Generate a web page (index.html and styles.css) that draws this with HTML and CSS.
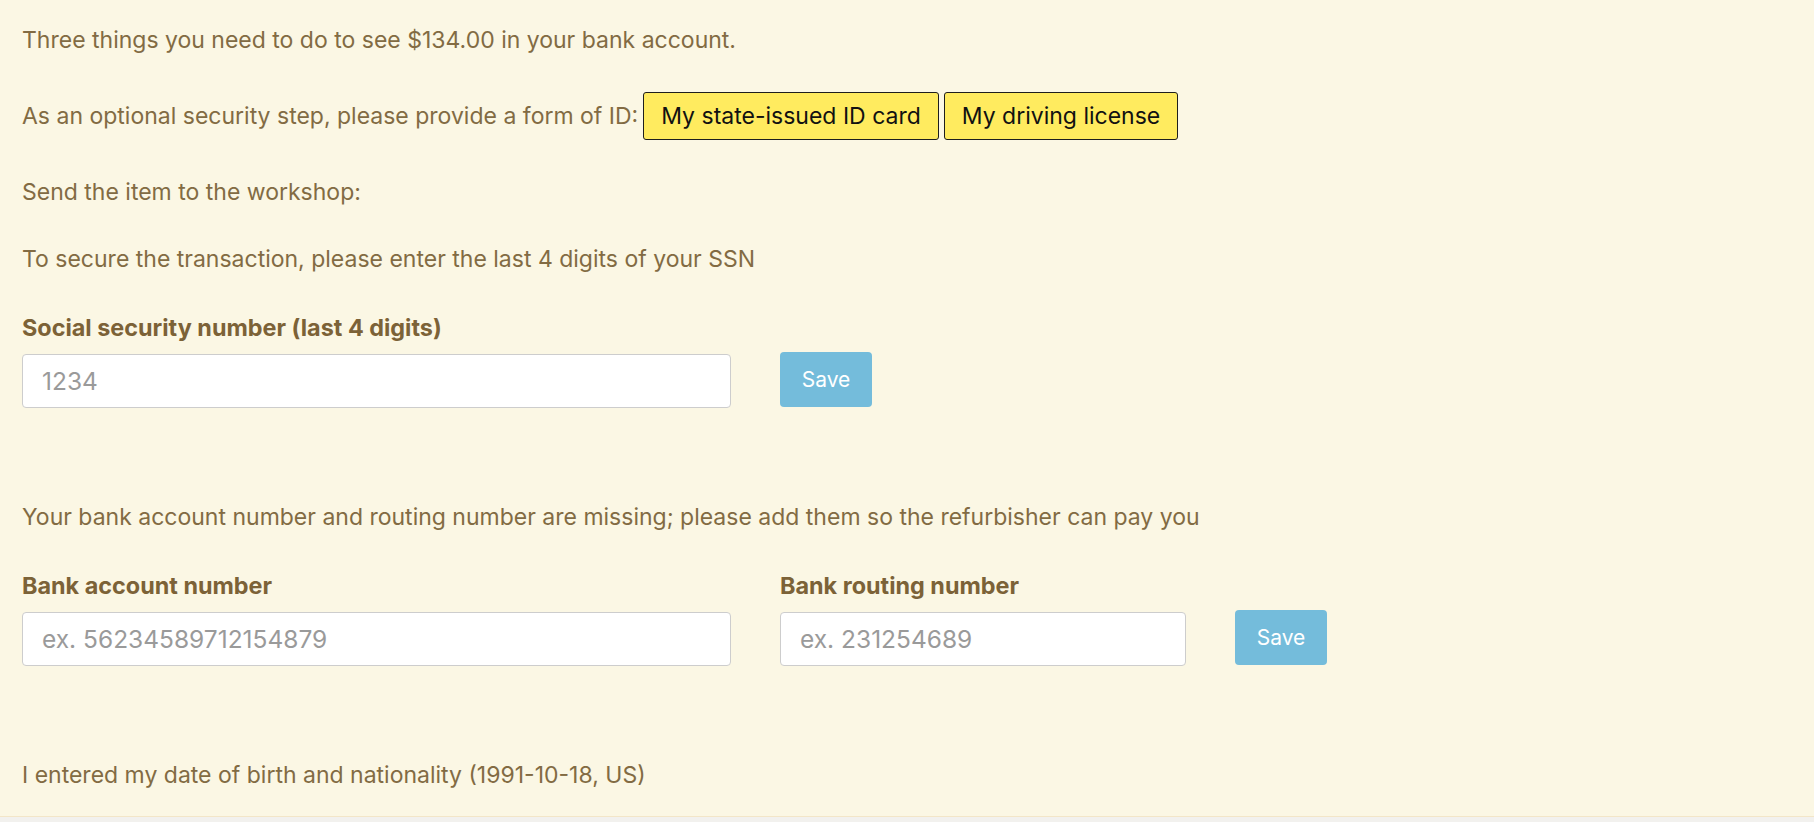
FILE: index.html
```html
<!DOCTYPE html>
<html lang="en">
<head>
    <meta charset="UTF-8">
    <meta name="viewport" content="width=device-width, initial-scale=1.0">
    <title>Payout steps</title>
    <link rel="stylesheet" href="styles.css">
</head>
<body>
    <div class="panel">
        <p class="intro">Three things you need to do to see $134.00 in your bank account.</p>

        <div class="step step-id">
            As an optional security step, please provide a form of ID:
            <button class="id-btn">My state-issued ID card</button>
            <button class="id-btn">My driving license</button>
        </div>

        <div class="step">Send the item to the workshop:</div>

        <div class="step">
            <p>To secure the transaction, please enter the last 4 digits of your SSN</p>
            <form class="field-row">
                <div class="field">
                    <label for="ssn">Social security number (last 4 digits)</label>
                    <input id="ssn" class="input input-wide" type="text" placeholder="1234">
                </div>
                <button type="button" class="save-btn">Save</button>
            </form>
        </div>

        <div class="step">
            <p>Your bank account number and routing number are missing; please add them so the refurbisher can pay you</p>
            <form class="field-row">
                <div class="field">
                    <label for="account">Bank account number</label>
                    <input id="account" class="input input-wide" type="text" placeholder="ex. 56234589712154879">
                </div>
                <div class="field">
                    <label for="routing">Bank routing number</label>
                    <input id="routing" class="input input-mid" type="text" placeholder="ex. 231254689">
                </div>
                <button type="button" class="save-btn">Save</button>
            </form>
        </div>

        <div class="step step-last">I entered my date of birth and nationality (1991-10-18, US)</div>
    </div>
    <div class="strip"></div>
</body>
</html>
```

FILE: styles.css
```css
body {
    margin: 0;
    background-color: #f2f1ee;
    font-family: Inter, "Noto Sans", sans-serif;
}

.panel {
    background-color: #fbf7e4;
    border-bottom: 1px solid #f3e6c8;
    height: 817px;
    box-sizing: border-box;
    padding: 25px 22px 0;
    color: #826b43;
    font-size: 23px;
    line-height: 30px;
}

.panel p {
    margin: 0;
}

.intro {
    margin-bottom: 37px !important;
}

.step {
    margin-bottom: 37px;
}

.step-id {
    display: flex;
    align-items: center;
    gap: 5px;
    height: 48px;
}

.id-btn {
    height: 48px;
    padding: 0 17px;
    background: #ffeb5f;
    border: 1px solid #1e1e1e;
    border-radius: 3px;
    font-family: Inter, "Noto Sans", sans-serif;
    font-size: 23px;
    color: #111;
}

.field-row {
    display: flex;
    align-items: flex-end;
    gap: 49px;
    margin-top: 39px;
    margin-bottom: 94px;
}

.field {
    display: flex;
    flex-direction: column;
}

.field label {
    font-weight: bold;
    font-size: 23.4px;
    color: #7c6237;
    margin-bottom: 11px;
}

.input {
    box-sizing: border-box;
    height: 54px;
    padding: 0 19px;
    border: 1px solid #cdcdcd;
    border-radius: 4px;
    background: white;
    font-family: Inter, "Noto Sans", sans-serif;
    font-size: 24.5px;
    color: #333;
}

.input::placeholder {
    color: #9a9a9a;
}

.input-wide { width: 709px; }
.input-mid { width: 406px; }

.save-btn {
    width: 92px;
    height: 55px;
    margin-bottom: 1px;
    background: #74bcdb;
    border: none;
    border-radius: 4px;
    color: white;
    font-family: Inter, "Noto Sans", sans-serif;
    font-size: 21px;
}

.step-last {
    margin-bottom: 0;
}

.strip {
    height: 8px;
}
```
